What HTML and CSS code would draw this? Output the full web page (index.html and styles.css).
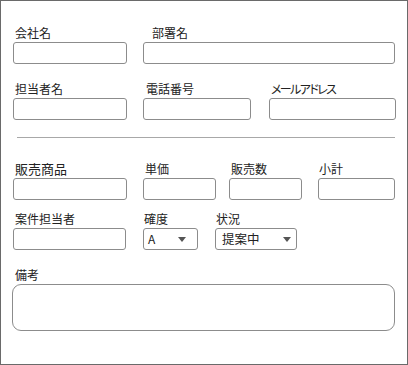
FILE: index.html
```html
<!DOCTYPE html>
<html lang="ja">
<head>
<meta charset="utf-8">
<link rel="stylesheet" href="styles.css">
</head>
<body>
<div class="panel">
  <div class="row row-1">
    <div class="field w114"><label class="lbl">会社名</label><div class="box"></div></div>
    <div class="field w252 ml16"><label class="lbl lbl-in9">部署名</label><div class="box"></div></div>
  </div>
  <div class="row row-2">
    <div class="field w114"><label class="lbl">担当者名</label><div class="box"></div></div>
    <div class="field w108 ml16"><label class="lbl lbl-in3">電話番号</label><div class="box"></div></div>
    <div class="field w127 ml18"><label class="lbl lbl-in2 kana">メールアドレス</label><div class="box"></div></div>
  </div>
  <div class="sep"></div>
  <div class="row row-3">
    <div class="field w114"><label class="lbl lbl-big">販売商品</label><div class="box"></div></div>
    <div class="field w73 ml16"><label class="lbl">単価</label><div class="box"></div></div>
    <div class="field w73 ml13"><label class="lbl">販売数</label><div class="box"></div></div>
    <div class="field w77 ml16"><label class="lbl lbl-in1">小計</label><div class="box"></div></div>
  </div>
  <div class="row row-4">
    <div class="field w113"><label class="lbl">案件担当者</label><div class="box"></div></div>
    <div class="field w55 ml17"><label class="lbl lbl-in1">確度</label>
      <div class="box sel sel-a"><span class="sel-text">A</span><svg class="arrow" width="8" height="5" viewBox="0 0 8 5"><path d="M0 0H8L4 5Z" fill="#555"/></svg></div>
    </div>
    <div class="field w82 ml17"><label class="lbl lbl-in1">状況</label>
      <div class="box sel sel-b"><span class="sel-text">提案中</span><svg class="arrow" width="8" height="5" viewBox="0 0 8 5"><path d="M0 0H8L4 5Z" fill="#555"/></svg></div>
    </div>
  </div>
  <div class="row row-5">
    <div class="field w383 mlm1"><label class="lbl lbl-in3">備考</label><div class="area"></div></div>
  </div>
</div>
</body>
</html>
```
FILE: styles.css
```css
html, body {
  margin: 0;
  padding: 0;
  background: #fff;
}
body {
  font-family: "Noto Sans CJK JP", "Noto Sans", sans-serif;
  font-size: 12px;
  color: #222;
}
.panel {
  box-sizing: border-box;
  width: 408px;
  height: 365px;
  border: 1px solid #6a6a6a;
  padding: 25px 0 0 12px;
}
.row {
  display: flex;
  align-items: flex-start;
}
.row-2 { margin-top: 18px; }
.row-3 { margin-top: 24px; }
.row-4 { margin-top: 12px; }
.row-5 { margin-top: 18px; }
.sep {
  margin: 17px 0 0 4px;
  width: 378px;
  height: 1px;
  background: #a8a8a8;
}
.field {
  display: flex;
  flex-direction: column;
}
.lbl {
  display: block;
  height: 16px;
  line-height: 13px;
  padding-left: 2px;
  white-space: nowrap;
}
.lbl-in9 { padding-left: 9px; }
.lbl-in3 { padding-left: 3px; }
.lbl-in2 { padding-left: 2px; }
.lbl-in1 { padding-left: 1px; }
.lbl-big { font-size: 13px; }
.kana {
  font-feature-settings: "palt";
  letter-spacing: -1.6px;
}
.box {
  box-sizing: border-box;
  height: 22px;
  border: 1px solid #8c8c8c;
  border-radius: 3px;
  background: #fff;
}
.sel {
  display: flex;
  align-items: center;
  justify-content: space-between;
}
.sel-text {
  line-height: 20px;
}
.sel-a { padding: 0 11px 0 4px; }
.sel-b { padding: 0 5px 0 6px; font-size: 12.5px; }
.arrow { display: block; }
.area {
  box-sizing: border-box;
  height: 47px;
  border: 1px solid #8c8c8c;
  border-radius: 9px;
}
.w55 { width: 55px; }
.w73 { width: 73px; }
.w77 { width: 77px; }
.w82 { width: 82px; }
.w108 { width: 108px; }
.w113 { width: 113px; }
.w114 { width: 114px; }
.w127 { width: 127px; }
.w252 { width: 252px; }
.w383 { width: 383px; }
.ml13 { margin-left: 13px; }
.ml16 { margin-left: 16px; }
.ml17 { margin-left: 17px; }
.ml18 { margin-left: 18px; }
.mlm1 { margin-left: -1px; }
```
